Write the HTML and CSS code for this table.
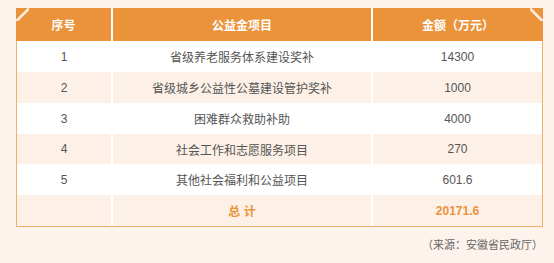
FILE: index.html
```html
<!DOCTYPE html>
<html lang="zh-CN">
<head>
<meta charset="utf-8">
<link rel="stylesheet" href="styles.css">
</head>
<body>
<div class="page">
  <div class="sheet">
    <div class="row head">
      <div class="cell corner-left">序号</div>
      <div class="cell">公益金项目</div>
      <div class="cell corner-right">金额（万元）</div>
    </div>
    <div class="row">
      <div class="cell">1</div>
      <div class="cell">省级养老服务体系建设奖补</div>
      <div class="cell">14300</div>
    </div>
    <div class="row alt">
      <div class="cell">2</div>
      <div class="cell">省级城乡公益性公墓建设管护奖补</div>
      <div class="cell">1000</div>
    </div>
    <div class="row">
      <div class="cell">3</div>
      <div class="cell">困难群众救助补助</div>
      <div class="cell">4000</div>
    </div>
    <div class="row alt short">
      <div class="cell">4</div>
      <div class="cell">社会工作和志愿服务项目</div>
      <div class="cell">270</div>
    </div>
    <div class="row">
      <div class="cell">5</div>
      <div class="cell">其他社会福利和公益项目</div>
      <div class="cell">601.6</div>
    </div>
    <div class="row alt total">
      <div class="cell"></div>
      <div class="cell">总 计</div>
      <div class="cell">20171.6</div>
    </div>
  </div>
  <p class="source">（来源：安徽省民政厅）</p>
</div>
</body>
</html>
```

FILE: styles.css
```css
* { box-sizing: border-box; }
html, body {
  margin: 0;
  padding: 0;
  background: #fdf3ec;
}
body {
  font-family: "Liberation Sans", "Noto Sans CJK SC", sans-serif;
  font-size: 12px;
  color: #555;
}
.page {
  width: 554px;
  height: 263px;
  padding: 8px 11px 0 16px;
}
.sheet {
  width: 527px;
  background: #fff;
  border: 1px solid #efb06b;
  border-top: none;
}
.row {
  display: grid;
  grid-template-columns: 94px 258px 169px;
  column-gap: 2px;
  height: 31px;
}
.row.short { height: 30px; }
.row.head {
  height: 33px;
  margin: 0 -1px;
  grid-template-columns: 95px 258px 170px;
}
.cell {
  display: flex;
  align-items: center;
  justify-content: center;
  white-space: nowrap;
}
.head .cell {
  background: #ea933b;
  color: #fff;
  font-weight: bold;
  position: relative;
}
.alt .cell { background: #fdf1e7; }
.total .cell {
  color: #ea933b;
  font-weight: bold;
}
.corner-left::before,
.corner-right::before {
  content: "";
  position: absolute;
  top: 0;
  width: 13px;
  height: 13px;
}
.corner-left::before {
  left: 0;
  background: linear-gradient(135deg, transparent 44%, #fbe6d3 44%, #fbe6d3 58%, transparent 58%);
}
.corner-right::before {
  right: 0;
  background: linear-gradient(225deg, transparent 44%, #fbe6d3 44%, #fbe6d3 58%, transparent 58%);
}
.source {
  margin: 11px 0 0;
  text-align: right;
  font-size: 11px;
  line-height: 14px;
  color: #666;
}
```
